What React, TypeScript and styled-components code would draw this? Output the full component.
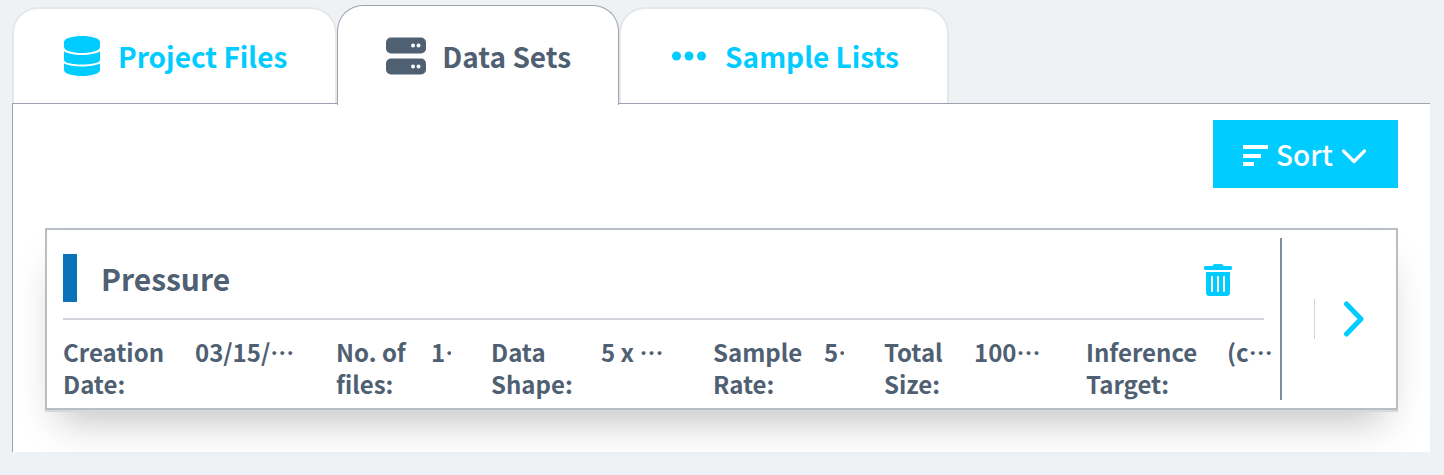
import React from 'react';
import styled, { createGlobalStyle, css } from 'styled-components';

const cyan = '#00ccff';
const slate = '#4f6072';
const line = '#9ca3af';

const GlobalStyle = createGlobalStyle`
  *, *::before, *::after { box-sizing: border-box; }
  body {
    margin: 0;
    background: #eef2f5;
    color: ${slate};
    font-family: "Noto Sans CJK JP", "Noto Sans", sans-serif;
  }
  button { font: inherit; border: 0; margin: 0; padding: 0; background: none; cursor: pointer; }
  h2, dl, dt, dd { margin: 0; }
  svg { display: block; flex: none; }
`;

const Page = styled.main`
  padding: 5px 14px 23px 12px;
`;

const TabBar = styled.div`
  display: flex;
  align-items: flex-end;
  height: 98px;
`;

const Tab = styled.button<{ $active?: boolean }>`
  display: flex;
  align-items: center;
  height: 96px;
  padding: 0 48px;
  border: 2px solid #e5e7eb;
  border-bottom: 0;
  border-radius: 26px 26px 0 0;
  background: #fff;
  color: ${cyan};
  font-size: 28px;
  font-weight: 700;
  line-height: 40px;
  white-space: nowrap;
  ${(p) =>
    p.$active &&
    css`
      position: relative;
      align-self: flex-start;
      height: 100px;
      padding-right: 47px;
      border: 1px solid ${line};
      border-bottom: 0;
      color: ${slate};
    `}
`;

const TabIcon = styled.span`
  display: flex;
  justify-content: center;
  width: 40px;
  margin-right: 16px;
`;

const Panel = styled.section`
  display: flex;
  flex-direction: column;
  padding: 16px 32px 42px;
  border-top: 1px solid ${line};
  border-left: 1px solid ${line};
  background: #fff;
`;

const SortButton = styled.button`
  display: flex;
  align-items: center;
  justify-content: center;
  align-self: flex-end;
  gap: 8px;
  width: 185px;
  height: 68px;
  padding-right: 2px;
  background: ${cyan};
  color: #fff;
  font-size: 28px;
  font-weight: 500;
`;

const Card = styled.article`
  display: flex;
  margin-top: 40px;
  border: 2px solid #b8bec5;
  background: #fff;
  box-shadow: 0 2px 0 #d6d8dc, 0 24px 38px -14px rgba(0, 0, 0, 0.25);
`;

const CardBody = styled.div`
  flex: 1;
  min-width: 0;
  margin: 8px 0;
  padding: 16px 0 0 16px;
  border-right: 2px solid #7f8c99;
`;

const CardHeader = styled.header`
  display: flex;
  align-items: center;
  margin-right: 16px;
  padding-bottom: 16px;
  border-bottom: 2px solid #d1d5db;
`;

const Marker = styled.span`
  width: 14px;
  height: 48px;
  margin-right: 24px;
  background: #0b72b9;
`;

const Title = styled.h2`
  flex: 1;
  font-size: 30px;
  font-weight: 700;
  line-height: 48px;
`;

const DeleteButton = styled.button`
  margin-right: 32px;
  padding-top: 4px;
  color: ${cyan};
`;

const Facts = styled.dl`
  display: grid;
  grid-template-columns: 273fr 155fr 222fr 171fr 202fr 194fr;
  padding-top: 16px;
  font-size: 24px;
  font-weight: 700;
  line-height: 32px;
`;

const Fact = styled.div`
  display: flex;
  min-width: 0;
`;

const FactLabel = styled.dt<{ $width: number }>`
  flex: none;
  width: ${(p) => p.$width}px;
`;

const FactValue = styled.dd<{ $narrow?: boolean }>`
  white-space: pre;
  ${(p) =>
    p.$narrow &&
    css`
      width: 20px;
      overflow-x: clip;
    `}
`;

const More = styled.span`
  display: inline-block;
`;

const OpenArea = styled.div`
  display: flex;
  align-items: center;
  width: 114px;
  padding-left: 32px;
`;

const OpenButton = styled.button`
  padding: 2px 0 2px 28px;
  border-left: 1px solid #d1d5db;
  color: ${cyan};
`;

const DatabaseIcon = () => (
  <svg width="36" height="40" viewBox="0 0 36 40" fill="currentColor" aria-hidden="true">
    <path d="M0 6C0 2.500 8 0 18 0s18 2.500 18 6v5c0 3.500-8 6-18 6S0 14.500 0 11z" />
    <path d="M0 15.500c4 2.200 11 3.500 18 3.500s14-1.300 18-3.500V24c0 2.800-8 4.500-18 4.500S0 26.800 0 24z" />
    <path d="M0 27.500c4 2 11 3 18 3s14-1 18-3V34c0 3.500-8 6-18 6S0 37.500 0 34z" />
  </svg>
);

const ServerIcon = () => (
  <svg width="40" height="38" viewBox="0 0 40 38" aria-hidden="true">
    <rect y="0.500" width="40" height="16" rx="5" fill="currentColor" />
    <rect y="21.500" width="40" height="16" rx="5" fill="currentColor" />
    <g fill="#fff">
      <circle cx="27" cy="8.500" r="2" />
      <circle cx="32.500" cy="8.500" r="2" />
      <circle cx="27" cy="29.500" r="2" />
      <circle cx="32.500" cy="29.500" r="2" />
    </g>
  </svg>
);

const DotsIcon = () => (
  <svg width="34" height="10" viewBox="0 0 34 10" fill="currentColor" aria-hidden="true">
    <circle cx="4.500" cy="5" r="4.500" />
    <circle cx="17" cy="5" r="4.500" />
    <circle cx="29.500" cy="5" r="4.500" />
  </svg>
);

const SortIcon = () => (
  <svg width="26" height="24" viewBox="0 0 26 24" fill="currentColor" aria-hidden="true">
    <path d="M1 3h25v4H1zM1 12h18v4H1zM1 20h11v4H1z" />
  </svg>
);

const ChevronDownIcon = () => (
  <svg width="26" height="20" viewBox="0 0 26 20" fill="none" stroke="currentColor" strokeWidth="3.200" strokeLinecap="round" strokeLinejoin="round" aria-hidden="true">
    <path d="M2.500 7l10.500 10.500 10.500-10.500" />
  </svg>
);

const TrashIcon = () => (
  <svg width="28" height="32" viewBox="0 0 28 32" aria-hidden="true">
    <path fill="currentColor" d="M8.500 2l.8-1.300Q9.700 0 10.500 0h7q.8 0 1.200.7l.8 1.300H26.500Q28 2 28 3.500v1Q28 6 26.500 6h-25Q0 6 0 4.500v-1Q0 2 1.500 2zM2 8h24v20.500q0 3.500-3.500 3.500h-17Q2 32 2 28.500z" />
    <path stroke="#fff" strokeWidth="2" strokeLinecap="round" d="M8 13v14M14 13v14M20 13v14" />
  </svg>
);

const ChevronRightIcon = () => (
  <svg width="22" height="36" viewBox="0 0 22 36" fill="none" stroke="currentColor" strokeWidth="5" strokeLinecap="round" strokeLinejoin="round" aria-hidden="true">
    <path d="M3.500 3l14.500 15-14.500 15" />
  </svg>
);

const facts = [
  { label: 'Creation Date:', value: '03/15/', labelWidth: 132 },
  { label: 'No. of files:', value: '1', labelWidth: 95, narrow: true },
  { label: 'Data Shape:', value: '5 x ', labelWidth: 110 },
  { label: 'Sample Rate:', value: '5', labelWidth: 111, narrow: true },
  { label: 'Total Size:', value: '100', labelWidth: 90 },
  { label: 'Inference Target:', value: '(c', labelWidth: 141 },
];

export default function App() {
  return (
    <Page>
      <GlobalStyle />
      <TabBar role="tablist">
        <Tab role="tab" aria-selected={false}>
          <TabIcon><DatabaseIcon /></TabIcon>
          Project Files
        </Tab>
        <Tab role="tab" aria-selected $active>
          <TabIcon><ServerIcon /></TabIcon>
          Data Sets
        </Tab>
        <Tab role="tab" aria-selected={false}>
          <TabIcon><DotsIcon /></TabIcon>
          Sample Lists
        </Tab>
      </TabBar>
      <Panel role="tabpanel">
        <SortButton>
          <SortIcon />
          Sort
          <ChevronDownIcon />
        </SortButton>
        <Card>
          <CardBody>
            <CardHeader>
              <Marker />
              <Title>Pressure</Title>
              <DeleteButton aria-label="Delete data set"><TrashIcon /></DeleteButton>
            </CardHeader>
            <Facts>
              {facts.map((f) => (
                <Fact key={f.label}>
                  <FactLabel $width={f.labelWidth}>{f.label}</FactLabel>
                  <FactValue $narrow={f.narrow}>{f.value}<More>…</More></FactValue>
                </Fact>
              ))}
            </Facts>
          </CardBody>
          <OpenArea>
            <OpenButton aria-label="Open data set"><ChevronRightIcon /></OpenButton>
          </OpenArea>
        </Card>
      </Panel>
    </Page>
  );
}
